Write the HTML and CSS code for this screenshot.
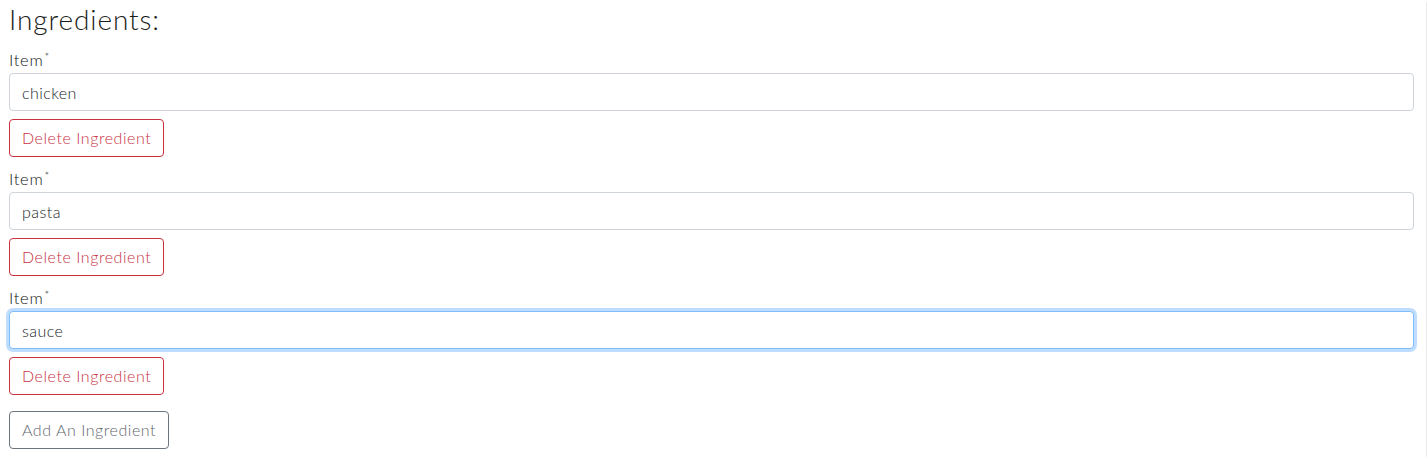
FILE: index.html
```html
<!DOCTYPE html>
<html lang="en">
<head>
<meta charset="utf-8">
<title>Ingredients</title>
<link rel="stylesheet" href="styles.css">
</head>
<body>
<div class="page">
  <h3 class="title">Ingredients:</h3>
  <div class="ingredient">
    <label class="label">Item<span class="req">*</span></label>
    <input class="field" type="text" value="chicken">
    <button class="btn btn-danger" type="button">Delete Ingredient</button>
  </div>
  <div class="ingredient">
    <label class="label">Item<span class="req">*</span></label>
    <input class="field" type="text" value="pasta">
    <button class="btn btn-danger" type="button">Delete Ingredient</button>
  </div>
  <div class="ingredient">
    <label class="label">Item<span class="req">*</span></label>
    <input class="field focused" type="text" value="sauce">
    <button class="btn btn-danger" type="button">Delete Ingredient</button>
  </div>
  <button class="btn btn-secondary add" type="button">Add An Ingredient</button>
</div>
</body>
</html>
```
FILE: styles.css
```css
* { box-sizing: border-box; }
html, body { margin: 0; padding: 0; background: #fff; }
body {
  font-family: Lato, "Open Sans", sans-serif;
  font-weight: 300;
  color: #212529;
  letter-spacing: 0.4px;
}
.page {
  min-height: 100vh;
  padding: 0 12px 0 9px;
  border-right: 1px solid #ececec;
}
.title {
  margin: 2px 0 0;
  font-size: 28px;
  line-height: 34px;
  font-weight: 300;
  letter-spacing: 0.9px;
  color: #1a1d20;
}
.ingredient {
  display: flex;
  flex-direction: column;
  align-items: flex-start;
  margin-top: 12px;
}
.ingredient + .ingredient { margin-top: 10px; }
.label {
  display: block;
  height: 24px;
  font-size: 16.5px;
  font-weight: 300;
  line-height: 24px;
  letter-spacing: 0.7px;
  color: #111;
}
.req {
  position: relative;
  top: -5px;
  font-size: 11px;
  line-height: 0;
  margin-left: 1px;
}
.field {
  display: block;
  width: 100%;
  height: 38px;
  padding: 6px 12px;
  font-family: inherit;
  font-weight: 300;
  font-size: 16px;
  line-height: 24px;
  letter-spacing: 0.45px;
  color: #212529;
  background: #fff;
  border: 1px solid #ced4da;
  border-radius: 4px;
  outline: none;
  margin-top: 1px;
}
.field.focused {
  border-color: #80bdff;
  box-shadow: 0 0 0 3px rgba(0, 123, 255, 0.25);
}
.btn {
  display: inline-block;
  height: 38px;
  padding: 6px 12px;
  font-family: inherit;
  font-weight: 300;
  font-size: 16px;
  line-height: 24px;
  background: transparent;
  border: 1px solid;
  border-radius: 4px;
  letter-spacing: 0.55px;
  cursor: pointer;
}
.btn-danger {
  margin-top: 8px;
  color: #c8323f;
  border-color: #c8323f;
}
.btn-secondary {
  color: #5f666d;
  border-color: #6c757d;
}
.add { margin-top: 16px; }
```
